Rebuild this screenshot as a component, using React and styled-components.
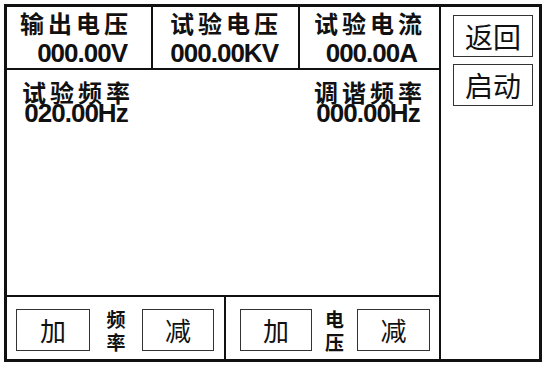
import styled, { createGlobalStyle } from "styled-components";

const GlobalStyle = createGlobalStyle`
  body {
    margin: 0;
    background: #fff;
  }
`;

const cjk = `"Noto Sans CJK SC", sans-serif`;
const num = `"Liberation Sans", Arial, sans-serif`;

export default function App() {
  return (
    <>
      <GlobalStyle />
      <Frame>
        <Main>
          <Header>
            <Cell $w="146px" $pr={23}>
              <Label>输出电压</Label>
              <Value $mr={1}>000.00V</Value>
            </Cell>
            <Cell $w="147px" $pr={20}>
              <Label>试验电压</Label>
              <Value>000.00KV</Value>
            </Cell>
            <Cell $w="139px" $pr={17} $last>
              <Label>试验电流</Label>
              <Value $mr={5}>000.00A</Value>
            </Cell>
          </Header>
          <Body>
            <Reading>
              <Label $short>试验频率</Label>
              <Value $tight>020.00Hz</Value>
            </Reading>
            <Reading>
              <Label $short>调谐频率</Label>
              <Value $tight>000.00Hz</Value>
            </Reading>
          </Body>
          <Footer>
            <Group $w="219px" $pl={9}>
              <KeyButton $w={74}>加</KeyButton>
              <Caption $w={52}>
                <span>频</span>
                <span>率</span>
              </Caption>
              <KeyButton $w={72}>减</KeyButton>
            </Group>
            <Group $pl={14} $last>
              <KeyButton $w={72}>加</KeyButton>
              <Caption $w={45}>
                <span>电</span>
                <span>压</span>
              </Caption>
              <KeyButton $w={73}>减</KeyButton>
            </Group>
          </Footer>
        </Main>
        <Side>
          <SideButton>返回</SideButton>
          <SideButton>启动</SideButton>
        </Side>
      </Frame>
    </>
  );
}

const Frame = styled.div`
  box-sizing: border-box;
  margin: 4px 0 0 4px;
  width: 538px;
  height: 358px;
  border: 3px solid #111;
  display: flex;
  font-family: ${cjk};
  color: #111;
`;

const Main = styled.div`
  box-sizing: border-box;
  width: 434px;
  border-right: 2px solid #111;
  display: flex;
  flex-direction: column;
`;

const Header = styled.div`
  box-sizing: border-box;
  height: 63px;
  border-bottom: 2px solid #111;
  display: flex;
`;

const Cell = styled.div`
  box-sizing: border-box;
  width: ${(p) => p.$w || "auto"};
  flex: ${(p) => (p.$last ? 1 : "none")};
  border-right: ${(p) => (p.$last ? "none" : "2px solid #111")};
  padding: 4px ${(p) => p.$pr}px 0 0;
  display: flex;
  flex-direction: column;
  align-items: flex-end;
`;

const Label = styled.div`
  font-family: ${cjk};
  font-size: 24px;
  font-weight: 700;
  line-height: ${(p) => (p.$short ? "20px" : "24px")};
  letter-spacing: 4px;
  margin-right: -4px;
`;

const Value = styled.div`
  font-family: ${num};
  font-size: 26px;
  font-weight: 700;
  letter-spacing: -1px;
  line-height: ${(p) => (p.$tight ? "22px" : "24px")};
  margin-top: ${(p) => (p.$tight ? "0" : "6px")};
  margin-right: ${(p) => p.$mr || 0}px;
`;

const Body = styled.div`
  flex: 1;
  display: flex;
  justify-content: space-between;
  align-items: flex-start;
  padding: 12px 17px 0 15px;
`;

const Reading = styled.div`
  display: flex;
  flex-direction: column;
  align-items: center;
`;

const Footer = styled.div`
  box-sizing: border-box;
  height: 64px;
  border-top: 2px solid #111;
  display: flex;
`;

const Group = styled.div`
  box-sizing: border-box;
  width: ${(p) => p.$w || "auto"};
  flex: ${(p) => (p.$last ? 1 : "none")};
  border-right: ${(p) => (p.$last ? "none" : "2px solid #111")};
  padding: 4px 0 0 ${(p) => p.$pl}px;
  display: flex;
  align-items: center;
`;

const KeyButton = styled.div`
  box-sizing: border-box;
  width: ${(p) => p.$w}px;
  height: 42px;
  border: 1px solid #333;
  display: flex;
  align-items: center;
  justify-content: center;
  font-family: ${cjk};
  font-size: 26px;
  line-height: 1;
`;

const Caption = styled.div`
  width: ${(p) => p.$w}px;
  display: flex;
  flex-direction: column;
  align-items: center;
  font-size: 19px;
  font-weight: 700;
  line-height: 23px;
`;

const Side = styled.div`
  flex: 1;
  display: flex;
  flex-direction: column;
  gap: 7px;
  padding: 8px 0 0 12px;
`;

const SideButton = styled.div`
  box-sizing: border-box;
  width: 80px;
  height: 42px;
  border: 1px solid #333;
  display: flex;
  align-items: center;
  justify-content: center;
  font-family: ${cjk};
  font-size: 28px;
  line-height: 1;
`;
